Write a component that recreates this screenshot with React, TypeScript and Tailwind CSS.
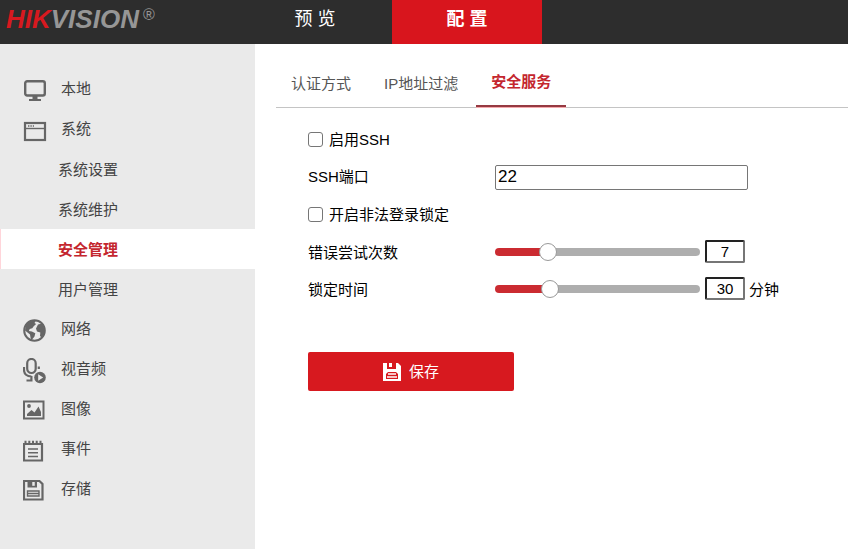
import { useState } from "react";
import type { ReactNode } from "react";

function Svg({ children, viewBox = "0 0 24 24" }: { children: ReactNode; viewBox?: string }) {
  return (
    <svg width="24" height="24" viewBox={viewBox} fill="none" stroke="currentColor" strokeWidth="2" aria-hidden="true">
      {children}
    </svg>
  );
}

const MonitorIcon = () => (
  <Svg>
    <rect x="2.2" y="2.2" width="19.6" height="14.3" rx="2" strokeWidth="2.4" />
    <path d="M9.5 17h5v3h3.5v2H6v-2h3.5z" fill="currentColor" stroke="none" />
  </Svg>
);

const WindowIcon = () => (
  <Svg>
    <rect x="2" y="4" width="20" height="17" strokeWidth="2.2" />
    <path d="M2 9.500h20" strokeWidth="1.4" />
    <path d="M5 7h6" strokeWidth="1.4" strokeDasharray="1.4 1" />
  </Svg>
);

const GlobeIcon = () => (
  <Svg viewBox="1 1 24 24">
    <circle cx="12.500" cy="12.500" r="10.300" strokeWidth="2" />
    <path
      d="M4 6C7 3 10 2.500 14 2.500L12.500 5l1.600 1-2.400 2.200-1.400 2-2.600.8-.8 2 3 .4 3.400 1.800-.8 3.200-2.400 3L9 22.500 8 16.500 3 12.500z"
      fill="currentColor"
      stroke="none"
    />
    <path d="M16 6.500l4-1 2.500 5v4.500l-3 4.500-1.500-1.500.3-3.500-3.300-1-1-3z" fill="currentColor" stroke="none" />
  </Svg>
);

const MicIcon = () => (
  <svg width="24" height="27" viewBox="1 1 24 27" fill="none" stroke="currentColor" strokeWidth="2.200" aria-hidden="true">
    <rect x="5.200" y="2" width="8.500" height="14" rx="4.200" />
    <path d="M2 10v3c0 4 3 6.500 7.400 6.500M9.400 19v4M4.500 23.500h6" />
    <path d="M16.800 12v-2.500" />
    <circle cx="18" cy="20.500" r="5.800" fill="currentColor" stroke="none" />
    <path d="M16.200 17.200l5 3.300-5 3.300z" fill="#eaeaea" stroke="none" />
  </svg>
);

const PictureIcon = () => (
  <Svg viewBox="1 1 24 24">
    <rect x="2" y="3.500" width="19.500" height="17" />
    <circle cx="7" cy="8" r="1.900" fill="currentColor" stroke="none" />
    <path d="M5 18v-2l4.500-4 3 2.500L16.500 8.500 19 14v4z" fill="currentColor" stroke="none" />
  </Svg>
);

const NotepadIcon = () => (
  <Svg viewBox="1 0 24 24">
    <path d="M2 5h18v16.500H2z" strokeWidth="2.200" />
    <path d="M3.500 5V1.800M7.300 5V1.800M11 5V1.800M14.700 5V1.800M18.500 5V1.800" />
    <path d="M6 10h10M6 13.800h10M6 17.500h10" strokeWidth="1.500" />
  </Svg>
);

const DiskIcon = () => (
  <Svg viewBox="1 1 24 24">
    <path d="M2 3h15.500L20.500 6v15.500H2z" strokeWidth="2.200" />
    <path d="M5.500 3h9.500v6.500H5.500z" fill="currentColor" stroke="none" />
    <path d="M11.500 4v3.800" strokeWidth="2.500" stroke="#eaeaea" />
    <path d="M5.500 13h11.500v5H5.500zM5.500 15.500H17" strokeWidth="1.400" />
  </Svg>
);

const SaveIcon = () => (
  <svg width="18" height="18" viewBox="0 0 18 18" aria-hidden="true">
    <path d="M0 0h15l3 3v15H0z" fill="#fff" />
    <path d="M4 0h2v4h3V0h4v6H4zM3 11l2-2h8l2 2v5H3z" fill="#d7191f" />
    <path d="M5 11h8M4 14h10" stroke="#fff" strokeWidth="1.500" />
  </svg>
);

type Item = { label: string; icon?: () => ReactNode; active?: boolean };

const menu: Item[] = [
  { label: "本地", icon: MonitorIcon },
  { label: "系统", icon: WindowIcon },
  { label: "系统设置" },
  { label: "系统维护" },
  { label: "安全管理", active: true },
  { label: "用户管理" },
  { label: "网络", icon: GlobeIcon },
  { label: "视音频", icon: MicIcon },
  { label: "图像", icon: PictureIcon },
  { label: "事件", icon: NotepadIcon },
  { label: "存储", icon: DiskIcon },
];

function MenuItem({ label, icon: Icon, active }: Item) {
  if (Icon) {
    return (
      <a href="#" className="flex h-10 items-center pl-[23px] text-[#444]">
        <span className="flex w-[38px] pt-1 text-[#666]">
          <Icon />
        </span>
        {label}
      </a>
    );
  }
  return (
    <a
      href="#"
      className={
        active
          ? "flex h-10 items-center border-l border-[#ffd5da] bg-white pt-0.5 pl-[57px] font-bold text-[#c4262e]"
          : "flex h-10 items-center pt-0.5 pl-[58px] text-[#444]"
      }
    >
      {label}
    </a>
  );
}

type SliderProps = { id: string; label: string; min: number; max: number; initial: number; unit?: string };

function SliderRow({ id, label, min, max, initial, unit }: SliderProps) {
  const [value, setValue] = useState(initial);
  const percent = ((value - min) / (max - min)) * 100;
  const clamp = (n: number) => Math.min(max, Math.max(min, n));
  return (
    <div className="flex h-[37px] items-center">
      <label htmlFor={id} className="w-[187px] shrink-0 pt-0.5">
        {label}
      </label>
      <input
        id={id}
        type="range"
        min={min}
        max={max}
        value={value}
        onChange={(e) => setValue(Number(e.target.value))}
        style={{ backgroundImage: `linear-gradient(to right, #cb2b31 ${percent}%, #aeaeae ${percent}%)` }}
        className="h-2 w-[205px] shrink-0 appearance-none rounded-full [&::-webkit-slider-thumb]:size-[18px] [&::-webkit-slider-thumb]:appearance-none [&::-webkit-slider-thumb]:rounded-full [&::-webkit-slider-thumb]:border [&::-webkit-slider-thumb]:border-[#999] [&::-webkit-slider-thumb]:bg-white"
      />
      <input
        type="text"
        aria-label={label}
        value={value}
        onChange={(e) => setValue(clamp(Number(e.target.value) || min))}
        className="ml-[5px] h-[23px] w-10 shrink-0 rounded-xs border-2 border-t-[#222] border-r-[#767676] border-b-[#767676] border-l-[#222] bg-white text-center"
      />
      {unit && <span className="ml-1 shrink-0 pt-0.5">{unit}</span>}
    </div>
  );
}

function CheckRow({ id, label }: { id: string; label: string }) {
  return (
    <div className="flex h-[37px] items-center gap-1.5">
      <input
        id={id}
        type="checkbox"
        className="size-[15px] shrink-0 appearance-none rounded-[3px] border border-[#767676] bg-white checked:bg-[#cb2b31]"
      />
      <label htmlFor={id}>{label}</label>
    </div>
  );
}

export default function App() {
  return (
    <div className="flex min-h-screen flex-col bg-white font-['Liberation_Sans','Noto_Sans_CJK_SC',sans-serif] text-[15px] leading-5 text-black">
      <header className="flex h-11 shrink-0 bg-[#2d2d2d]">
        <div className="flex w-[242px] shrink-0 items-start pt-[5px] pl-1.5 text-[26px] leading-7 font-bold text-[#969696] italic">
          <span className="text-[#d7191f]">HIK</span>VISION
          <span className="pl-1 text-[16px] leading-5 font-normal not-italic">®</span>
        </div>
        <nav className="flex text-[18px] text-white">
          <a href="#" className="flex w-[150px] justify-center pt-[9px] pr-1">
            预&nbsp;览
          </a>
          <a href="#" className="flex w-[150px] justify-center bg-[#d8151d] pt-[9px] font-bold">
            配&nbsp;置
          </a>
        </nav>
      </header>

      <div className="flex flex-1">
        <nav className="w-[255px] shrink-0 bg-[#eaeaea] pt-[25px]">
          {menu.map((item) => (
            <MenuItem key={item.label} {...item} />
          ))}
        </nav>

        <main className="min-w-0 flex-1">
          <nav className="ml-[21px] flex h-16 items-stretch gap-[3px] border-b border-[#c4c4c4] text-[#555]">
            <a href="#" className="px-[15px] pt-[30px]">
              认证方式
            </a>
            <a href="#" className="px-[15px] pt-[30px]">
              IP地址过滤
            </a>
            <a
              href="#"
              className="border-b-2 border-[#963a42] px-[15px] pt-7 font-bold text-[#c4262e] shadow-[0_1px_0_#f5a9ad]"
            >
              安全服务
            </a>
          </nav>

          <form className="pt-[13px] pl-[53px]" onSubmit={(e) => e.preventDefault()}>
            <CheckRow id="ssh" label="启用SSH" />
            <div className="flex h-[38px] items-center">
              <label htmlFor="port" className="w-[187px] shrink-0">
                SSH端口
              </label>
              <input
                id="port"
                type="text"
                defaultValue="22"
                className="h-[25px] w-[253px] rounded-xs border border-[#767676] bg-white pl-0.5 text-[17px]"
              />
            </div>
            <CheckRow id="lock" label="开启非法登录锁定" />
            <SliderRow id="attempts" label="错误尝试次数" min={3} max={20} initial={7} />
            <SliderRow id="duration" label="锁定时间" min={1} max={120} initial={30} unit="分钟" />
            <button
              type="submit"
              className="mt-[45px] flex h-[39px] w-[206px] items-center justify-center gap-2 rounded-xs bg-[#d7191f] text-white"
            >
              <SaveIcon />
              保存
            </button>
          </form>
        </main>
      </div>
    </div>
  );
}
